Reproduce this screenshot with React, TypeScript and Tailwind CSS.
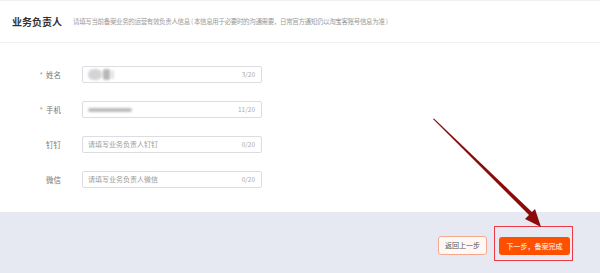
import React from "react";

const rows = [
  { label: "姓名", required: true, value: "name", count: "3/20" },
  { label: "手机", required: true, value: "phone", count: "11/20" },
  { label: "钉钉", required: false, placeholder: "请填写业务负责人钉钉", count: "0/20" },
  { label: "微信", required: false, placeholder: "请填写业务负责人微信", count: "0/20" },
];

function Blurred({ kind }: { kind: string }) {
  if (kind === "name") {
    return (
      <div className="flex items-center gap-[1px] blur-[1px]">
        <span className="h-[11px] w-[14px] rounded-full bg-[#d4d4d4]" />
        <span className="h-[11px] w-[7px] rounded-[2px] bg-[#b8b8b8]" />
        <span className="h-[9px] w-[3px] rounded-full bg-[#e2e2e2]" />
      </div>
    );
  }
  return (
    <div className="flex items-center blur-[0.8px]">
      <span className="h-[4px] w-[44px] rounded-full bg-[#bdbdbd]" />
    </div>
  );
}

export default function App() {
  return (
    <div
      className="relative h-[273px] w-[600px] overflow-hidden bg-white"
      style={{ fontFamily: '"Noto Sans CJK SC", "Liberation Sans", sans-serif' }}
    >
      {/* header */}
      <div className="flex h-[43px] items-center gap-[11px] border-t border-b border-[#f0f0f0] pl-[12px]">
        <span className="text-[10px] font-bold leading-none text-[#333]">业务负责人</span>
        <span className="text-[6.5px] leading-none tracking-[-0.35px] text-[#999]">
          请填写当前备案业务的运营有效负责人信息 ( 本信息用于必要时的沟通需要，日常官方通知仍以淘宝客账号信息为准 )
        </span>
      </div>

      {/* form */}
      <div className="flex flex-col gap-[18px] pt-[23px] pb-[24px]">
        {rows.map((r) => (
          <div key={r.label} className="flex items-center">
            <div className="flex w-[61px] items-center justify-end gap-[3px] text-[7.5px] leading-none text-[#777]">
              {r.required && <span className="text-[#999]">*</span>}
              <span>{r.label}</span>
            </div>
            <div className="ml-[21px] flex h-[17px] w-[180px] items-center justify-between rounded-[2px] border border-[#dcdde3] pl-[5px] pr-[6px]">
              {r.value ? (
                <Blurred kind={r.value} />
              ) : (
                <span className="text-[7px] leading-none text-[#9a9a9a]">{r.placeholder}</span>
              )}
              <span className="text-[6.5px] leading-none text-[#aaa]">{r.count}</span>
            </div>
          </div>
        ))}
      </div>

      {/* footer */}
      <div className="flex h-[61px] items-start justify-end gap-[12px] bg-[#e6e9f2] pt-[24px] pr-[30px]">
        <button className="flex h-[19px] w-[49px] items-center justify-center rounded-[3px] border border-[#f5a98e] bg-[#fff8f4] text-[7px] leading-none text-[#555]">
          返回上一步
        </button>
        <button className="mt-[1px] flex h-[18px] w-[71px] items-center justify-center rounded-[3px] bg-[#ff5000] text-[7px] leading-none text-white">
          下一步，备案完成
        </button>
      </div>

      {/* annotation: red box + arrow */}
      <div className="absolute left-[494px] top-[226px] h-[35px] w-[79px] border-[1.5px] border-[#ec3b46]" />
      <svg className="absolute left-0 top-0" width="600" height="273" viewBox="0 0 600 273">
        <polygon points="433,119 434,118.6 533,213 530,216" fill="#8b0a0a" />
        <polygon points="541,227 525,219 535,209" fill="#8b0a0a" />
      </svg>
    </div>
  );
}
